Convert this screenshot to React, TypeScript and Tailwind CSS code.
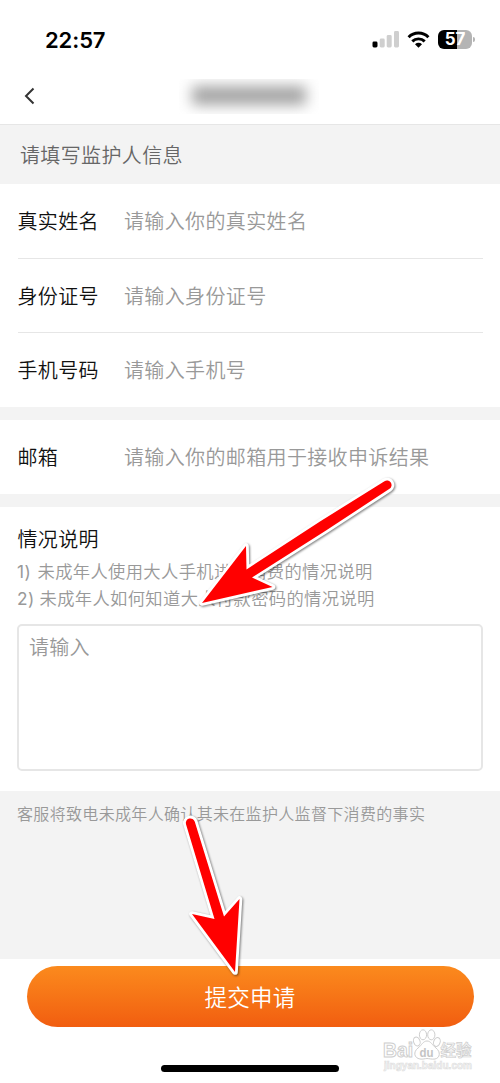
import type { ReactNode } from "react";

function StatusBar() {
  return (
    <div className="flex h-[68px] items-start justify-between pl-[45px] pr-[25px]">
      <span className="mt-[25.5px] font-['Inter'] text-[22px] leading-[28px] font-semibold tracking-[-0.1px] text-black">
        22:57
      </span>
      <div className="mt-[29px] flex h-[20px] items-center">
        <svg width="28" height="18" viewBox="0 0 28 18" className="mr-[7px]">
          <rect x="0.5" y="11.5" width="5" height="6" rx="1.4" fill="#000" />
          <rect x="7.7" y="8.5" width="5" height="9" rx="1.4" fill="#cfcfcf" />
          <rect x="14.7" y="5" width="5" height="12.5" rx="1.4" fill="#cfcfcf" />
          <rect x="22" y="1" width="5" height="16.5" rx="1.4" fill="#cfcfcf" />
        </svg>
        <svg width="23" height="17" viewBox="0 0 23 17" className="mr-[8px]">
          <path d="M1.6 6.2C7 .7 16 .7 21.4 6.2" fill="none" stroke="#000" strokeWidth="3" />
          <path d="M5.3 10.4c3.4-3.4 9-3.4 12.4 0" fill="none" stroke="#000" strokeWidth="2.9" />
          <path d="M8 13.2c2-1.8 5-1.8 7 0l-3.5 3.6z" fill="#000" />
        </svg>
        <div className="flex h-[19px] w-[34px] items-center justify-center rounded-[6px] bg-[linear-gradient(90deg,#000_57%,#b4b4b4_57%)] font-['Inter'] text-[17px] leading-none font-bold tracking-[-0.2px] text-white">
          57
        </div>
        <div className="ml-[1px] h-[5px] w-[2px] rounded-r-full bg-[#b4b4b4]" />
      </div>
    </div>
  );
}

function Field({ label, hint, line }: { label: string; hint: string; line?: boolean }) {
  return (
    <div>
      <div className="flex h-[74px] items-center text-[20px] tracking-[0.36px]">
        <span className="w-[106.5px] text-[#111]">{label}</span>
        <span className="text-[#999]">{hint}</span>
      </div>
      {line && <div className="-mt-[0.5px] h-px bg-[#e6e6e6]" />}
    </div>
  );
}

function Group({ children }: { children: ReactNode }) {
  return <div className="bg-white px-[17.5px]">{children}</div>;
}

function Arrow({ d, className, w, h }: { d: string; className: string; w: number; h: number }) {
  return (
    <svg width={w} height={h} viewBox={`0 0 ${w} ${h}`} className={className}>
      <path d={d} fill="#f00" stroke="#fff" strokeWidth="5.6" strokeLinejoin="round" paintOrder="stroke" />
    </svg>
  );
}

function Watermark() {
  return (
    <svg width="96" height="48" viewBox="0 0 96 48" className="absolute top-[1027px] left-[381px]">
      <g fill="#fff" stroke="#cecece" strokeWidth="1">
        <text x="2" y="30" fontFamily="Liberation Sans" fontWeight="700" fontSize="20" textLength="30" lengthAdjust="spacingAndGlyphs">
          Bai
        </text>
        <ellipse cx="35.8" cy="14.5" rx="3.2" ry="4.5" transform="rotate(-20 35.8 14.5)" />
        <ellipse cx="42" cy="7.8" rx="3.6" ry="5" />
        <ellipse cx="50.3" cy="7.8" rx="3.6" ry="5" />
        <ellipse cx="55.9" cy="15" rx="3.2" ry="4.5" transform="rotate(20 55.9 15)" />
        <path d="M46 14c-4 0-5 4-9 7-5 4-4 10 2 11 3 .5 5-.5 7-.5s5 1 8 .5c5-1 6-7 1-11-4-3-5-7-9-7z" />
      </g>
      <text x="38.5" y="29.5" fontFamily="Liberation Sans" fontWeight="700" fontSize="13" fill="#c4c4c4" textLength="14" lengthAdjust="spacingAndGlyphs">
        du
      </text>
      <text x="59.5" y="29" fontFamily="Noto Sans CJK SC" fontWeight="700" fontSize="15.5" fill="#f4f4f4" stroke="#cfcfcf" strokeWidth="0.7" textLength="31">
        经验
      </text>
      <text x="3" y="42" fontFamily="Liberation Sans" fontWeight="700" fontSize="10" fill="#f6f6f6" stroke="#dedede" strokeWidth="0.6" textLength="88" lengthAdjust="spacingAndGlyphs">
        jingyan.baidu.com
      </text>
    </svg>
  );
}

export default function App() {
  return (
    <div className="relative flex h-[1083px] w-[500px] flex-col overflow-hidden bg-[#f3f3f3] font-['Noto_Sans_CJK_SC',sans-serif] font-[350]">
      <div className="h-[124px] bg-white">
        <StatusBar />
        <div className="flex h-[56px] items-center">
          <svg width="12" height="18" viewBox="0 0 12 18" className="ml-[24px]">
            <path d="M9.5 1.5L2 9l7.5 7.5" fill="none" stroke="#333" strokeWidth="2" />
          </svg>
          <div className="ml-[143px] flex h-[35px] w-[140px] justify-center overflow-hidden">
            <div className="mt-[7px] h-[19px] w-[114px] bg-[#a4a4a4] blur-[7px]" />
          </div>
        </div>
      </div>

      <div className="flex h-[60px] items-center border-t border-[#e6e6e6] pl-[20px] text-[20px] tracking-[0.36px] text-[#666]">
        请填写监护人信息
      </div>

      <Group>
        <Field label="真实姓名" hint="请输入你的真实姓名" line />
        <Field label="身份证号" hint="请输入身份证号" line />
        <Field label="手机号码" hint="请输入手机号" />
      </Group>

      <div className="mt-[13px]">
        <Group>
          <Field label="邮箱" hint="请输入你的邮箱用于接收申诉结果" />
        </Group>
      </div>

      <div className="mt-[13px] h-[284px] bg-white px-[17px] pt-[17px]">
        <h2 className="pl-[0.5px] text-[20px] leading-[30px] tracking-[0.33px] text-[#111]">情况说明</h2>
        <div className="mt-[4px] text-[17.3px] leading-[26.5px] tracking-[0.36px] text-[#999]">
          <p>
            <span className="inline-block w-[20.5px] font-['Inter'] leading-none font-normal">1)</span>
            未成年人使用大人手机进行消费的情况说明
          </p>
          <p>
            <span className="inline-block w-[22.5px] font-['Inter'] leading-none font-normal">2)</span>
            未成年人如何知道大人付款密码的情况说明
          </p>
        </div>
        <div className="mt-[13px] h-[147px] w-[466px] rounded-[5px] border-[2px] border-[#e6e6e6] px-[10px] pt-[6px] text-[20px] leading-[30px] tracking-[0.2px] text-[#999]">
          请输入
        </div>
      </div>

      <p className="h-[168px] pt-[10px] pl-[17px] text-[16px] leading-[24px] tracking-[0.33px] text-[#999]">
        客服将致电未成年人确认其未在监护人监督下消费的事实
      </p>

      <div className="flex h-[124px] flex-col items-center bg-white pt-[7px]">
        <button className="h-[61px] w-[447px] rounded-full bg-linear-to-b from-[#fb8a1d] to-[#f15d10] text-[22.5px] tracking-[0.3px] text-white">
          提交申请
        </button>
        <div className="mt-[38px] h-[7px] w-[178px] rounded-full bg-black" />
      </div>

      <Arrow
        w={230}
        h={150}
        className="absolute top-[470px] left-[180px] drop-shadow-[1px_1px_1px_rgba(0,0,0,0.5)]"
        d="M22 133L66 76L66.5 99.5L140 51.5L204.5 11.2A4.5 4.5 0 0 1 209.5 18.8L146 60.5L72 107.5L92.5 117Z"
      />
      <Arrow
        w={160}
        h={220}
        className="absolute top-[800px] left-[150px] drop-shadow-[1px_1px_1px_rgba(0,0,0,0.5)]"
        d="M85 172L42 114L64.5 119L36 24.3A4.5 4.5 0 0 1 44.8 21.7L74 116.5L89.5 99Z"
      />
      <Watermark />
    </div>
  );
}
